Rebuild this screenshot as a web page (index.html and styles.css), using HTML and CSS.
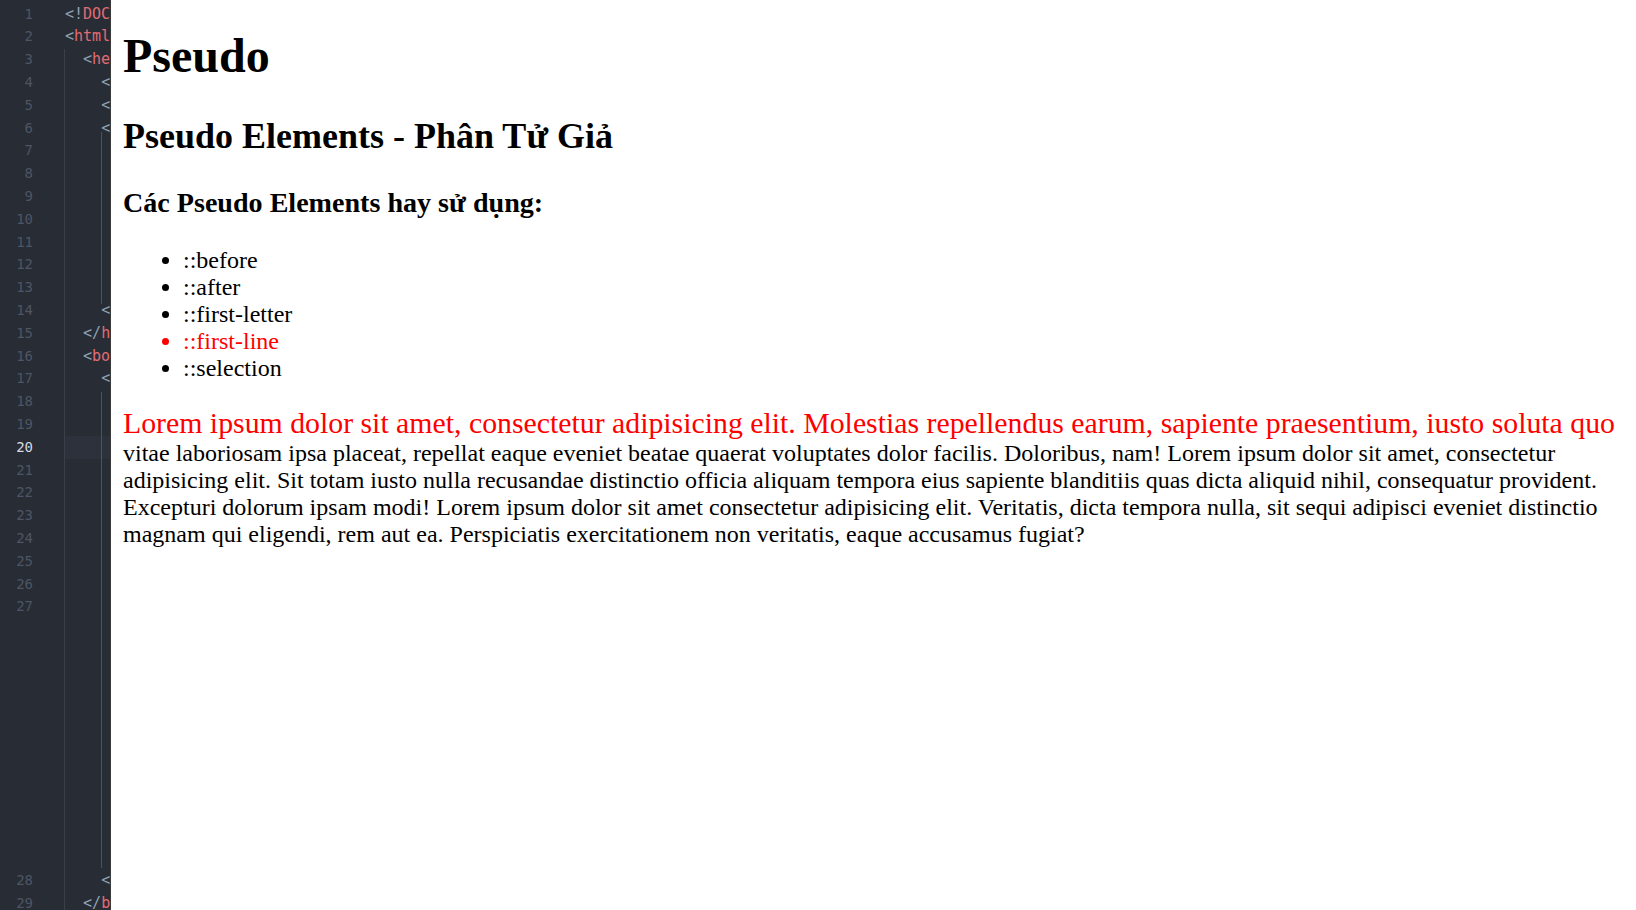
FILE: index.html
```html
<!DOCTYPE html>
<html lang="vi">
<head>
<meta charset="utf-8">
<title>Pseudo</title>
<link rel="stylesheet" href="styles.css">
</head>
<body>
<aside class="editor">
  <div class="gutter">
    <div class="num">1</div><div class="num">2</div><div class="num">3</div><div class="num">4</div><div class="num">5</div><div class="num">6</div><div class="num">7</div><div class="num">8</div><div class="num">9</div><div class="num">10</div><div class="num">11</div><div class="num">12</div><div class="num">13</div><div class="num">14</div><div class="num">15</div><div class="num">16</div><div class="num">17</div><div class="num">18</div><div class="num">19</div><div class="num active">20</div><div class="num">21</div><div class="num">22</div><div class="num">23</div><div class="num">24</div><div class="num">25</div><div class="num">26</div><div class="num tall">27</div><div class="num">28</div><div class="num">29</div>
  </div>
  <div class="code">
    <span class="guide g0"></span>
    <span class="guide g4a"></span>
    <span class="guide g4b"></span>
    <div class="ln"><span class="p">&lt;!</span><span class="t">DOCTYPE</span> html&gt;</div>
    <div class="ln"><span class="p">&lt;</span><span class="t">html</span> lang="en"&gt;</div>
    <div class="ln">  <span class="p">&lt;</span><span class="t">head</span>&gt;</div>
    <div class="ln">    <span class="p">&lt;</span><span class="t">meta</span></div>
    <div class="ln">    <span class="p">&lt;</span><span class="t">meta</span></div>
    <div class="ln">    <span class="p">&lt;</span><span class="t">style</span>&gt;</div>
    <div class="ln">      </div>
    <div class="ln">      </div>
    <div class="ln">      </div>
    <div class="ln">      </div>
    <div class="ln">      </div>
    <div class="ln">      </div>
    <div class="ln">      </div>
    <div class="ln">    <span class="p">&lt;/</span><span class="t">style</span>&gt;</div>
    <div class="ln">  <span class="p">&lt;/</span><span class="t">head</span>&gt;</div>
    <div class="ln">  <span class="p">&lt;</span><span class="t">body</span>&gt;</div>
    <div class="ln">    <span class="p">&lt;</span><span class="t">h1</span>&gt;</div>
    <div class="ln">      </div>
    <div class="ln">      </div>
    <div class="ln cur">      </div>
    <div class="ln">      </div>
    <div class="ln">      </div>
    <div class="ln">      </div>
    <div class="ln">      </div>
    <div class="ln">      </div>
    <div class="ln">      </div>
    <div class="ln tall">      </div>
    <div class="ln">    <span class="p">&lt;/</span><span class="t">p</span>&gt;</div>
    <div class="ln">  <span class="p">&lt;/</span><span class="t">body</span>&gt;</div>
  </div>
</aside>
<main class="page">
  <h1>Pseudo</h1>
  <h2>Pseudo Elements - Phân Tử Giả</h2>
  <h3>Các Pseudo Elements hay sử dụng:</h3>
  <ul class="list">
    <li>::before</li>
    <li>::after</li>
    <li>::first-letter</li>
    <li class="hot">::first-line</li>
    <li>::selection</li>
  </ul>
  <p class="lorem">Lorem ipsum dolor sit amet, consectetur adipisicing elit. Molestias repellendus earum, sapiente praesentium, iusto soluta quo vitae laboriosam ipsa placeat, repellat eaque eveniet beatae quaerat voluptates dolor facilis. Doloribus, nam! Lorem ipsum dolor sit amet, consectetur adipisicing elit. Sit totam iusto nulla recusandae distinctio officia aliquam tempora eius sapiente blanditiis quas dicta aliquid nihil, consequatur provident. Excepturi dolorum ipsam modi! Lorem ipsum dolor sit amet consectetur adipisicing elit. Veritatis, dicta tempora nulla, sit sequi adipisci eveniet distinctio magnam qui eligendi, rem aut ea. Perspiciatis exercitationem non veritatis, eaque accusamus fugiat?</p>
</main>
</body>
</html>
```
FILE: styles.css
```css
html, body {
  margin: 0;
  padding: 0;
}
body {
  display: flex;
  height: 910px;
  overflow: hidden;
  background: #ffffff;
  font-family: "Liberation Serif", "Times New Roman", serif;
  color: #000;
}
.editor {
  flex: none;
  width: 111px;
  height: 910px;
  background: #282c34;
  display: flex;
  overflow: hidden;
  padding-top: 2.6px;
  box-sizing: border-box;
  border-right: 1px solid #3a3a3a;
}
.gutter {
  flex: none;
  width: 64px;
  box-sizing: border-box;
  padding-right: 31px;
  font-family: "DejaVu Sans Mono", monospace;
  font-size: 14px;
  color: #4e5565;
  text-align: right;
}
.num {
  height: 22.8px;
  line-height: 22.8px;
}
.num.active {
  color: #d7dae0;
}
.num.tall, .ln.tall {
  height: 273.6px;
}
.code {
  flex: 1;
  min-width: 0;
  position: relative;
  font-family: "DejaVu Sans Mono", monospace;
  font-size: 15px;
  color: #abb2bf;
}
.ln {
  height: 22.8px;
  line-height: 22.8px;
  white-space: pre;
  overflow: hidden;
  padding-left: 1px;
}
.ln.cur {
  background: #2c313c;
}
.p {
  color: #8fa1b3;
}
.t {
  color: #e06c75;
}
.guide {
  position: absolute;
  width: 1px;
  background: #3b4048;
}
.g0 {
  left: 0;
  top: 46px;
  bottom: -10px;
}
.g4a {
  left: 37px;
  top: 129px;
  height: 172px;
  background: #4b5263;
}
.g4b {
  left: 37px;
  top: 389px;
  height: 476px;
  background: #4b5263;
}
.page {
  flex: 1;
  min-width: 0;
  padding: 0 12px;
  font-size: 24px;
}
.page h1 {
  font-size: 48px;
  margin: 28px 0 32px;
}
.page h2 {
  font-size: 36px;
  margin: 30px 0;
}
.page h3 {
  font-size: 28.08px;
  margin: 28px 0;
}
.list {
  margin: 24px 0;
  padding-left: 60px;
}
.list .hot {
  color: #ff0000;
}
.lorem {
  margin: 24px 0;
}
.lorem::first-line {
  color: #ff0000;
  font-size: 29.8px;
}
```
